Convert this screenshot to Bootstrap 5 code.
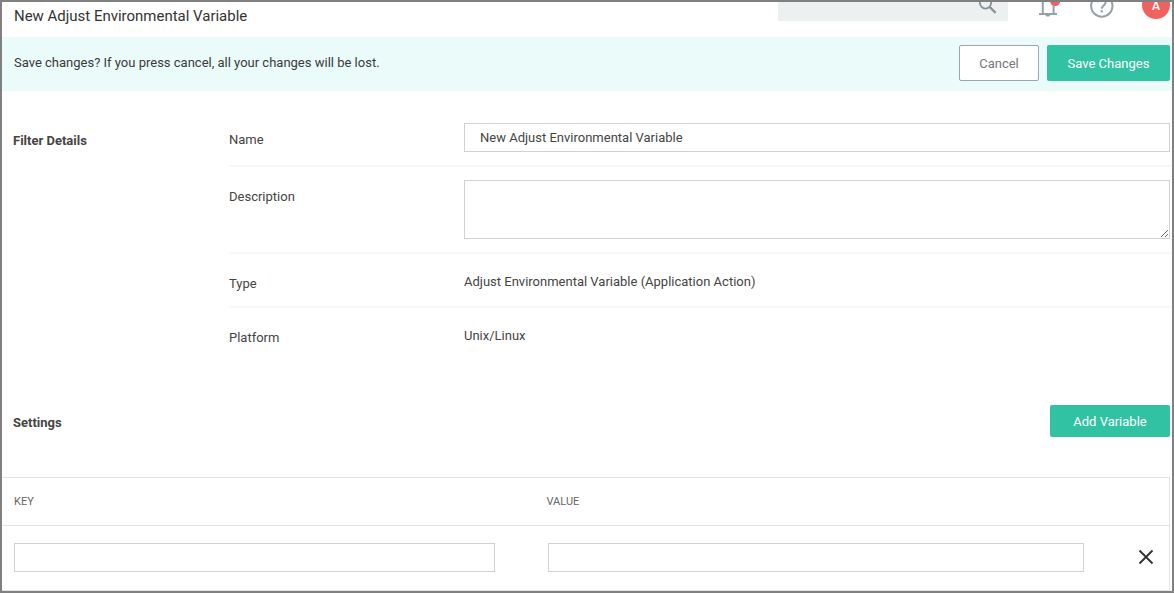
<!DOCTYPE html>
<html lang="en">
<head>
<meta charset="utf-8">
<title>New Adjust Environmental Variable</title>
<link href="https://cdn.jsdelivr.net/npm/bootstrap@5.3.0/dist/css/bootstrap.min.css" rel="stylesheet">
<style>
body{font-family:Roboto,"Liberation Sans",sans-serif;font-size:13px;line-height:20px;color:#444;background:#fff}
.app-frame{height:593px;border:2px solid #808080}
.topbar{height:35px}
.page-title{font-size:14.97px;line-height:20px;color:#333;padding:4px 0 0 12px}
.search-box{width:230px;height:19px;background:#ecf0f1;margin-right:30px;padding-right:11px}
.help-icon{margin-left:24px}
.avatar-clip{width:28px;height:17px;margin-left:24px;margin-right:2px}
.notice{height:54px;background:#ebfbfa;padding:8px 2px 0 12px;color:#3a3a3a}
.notice-text{padding-top:8px}
.app-btn{font-size:13px;line-height:18px;border-radius:2px;padding:1px 0 0;height:36px}
.btn-cancel{width:80px;background:#fff;border:1px solid #9aa5ac;color:#777}
.btn-go{background:#30c2a3;color:#fff;border:0}
.btn-save{width:123px}
.btn-add{width:120px;height:32px}
.details{padding:32px 2px 0 11px;height:314px}
.side-head{width:216px;font-weight:700;padding-top:8px}
.field-row{border-bottom:2px solid #f7f7f7}
.field-row:last-child{border-bottom:0}
.row-name{height:44px}
.row-desc{height:87px;padding-top:13px}
.row-text{height:54px;padding-top:18px}
.field-label{width:235px;padding-top:7px}
.row-text .field-label{padding-top:2px}
.app-input{height:29px;border:1px solid #d1d1d1;border-radius:0;font-size:13px;line-height:20px;padding:0 15px;color:#444}
textarea.app-input{height:59px;min-height:59px}
.app-input:focus{box-shadow:none;border-color:#30c2a3}
.settings-bar{height:72px;padding:0 2px 0 11px}
.settings-head{padding-top:8px}
.vars{height:114px;margin-right:2px;border:1px solid #e3e3e3;border-left:0}
.vars-head{height:48px;border-bottom:1px solid #e3e3e3;font-size:11px;line-height:47px;color:#666;padding-left:12px}
.col-key{width:532.5px}
.vars-line{padding:17px 0 0 12px}
.input-key{width:481px}
.input-value{width:536px;margin-left:53px}
.remove-icon{margin:6px 0 0 54px}
svg{display:block}
</style>
</head>
<body>
<div class="app-frame overflow-hidden">
  <header class="topbar d-flex">
    <h1 class="page-title mb-0 fw-normal me-auto">New Adjust Environmental Variable</h1>
    <div class="search-box d-flex justify-content-end">
      <svg width="18" height="12" viewBox="0 0 18 12" fill="none" stroke="#85929b" stroke-width="1.8"><circle cx="6.5" cy="1" r="5.6"/><path d="M10.6 4.9L16.6 10.9" stroke-width="2.2"/></svg>
    </div>
    <svg width="22" height="15" viewBox="0 0 22 15" fill="none"><path d="M4.8 0V11M15.6 3V11" stroke="#95a1aa" stroke-width="2"/><path d="M1 12H19" stroke="#95a1aa" stroke-width="2"/><path d="M7.3 13h5l-1 1.6H8.3z" fill="#95a1aa"/><circle cx="17.2" cy="-1.2" r="5.2" fill="#f0625f"/></svg>
    <svg class="help-icon" width="34" height="16" viewBox="-4 0 34 16" fill="none" stroke="#95a1aa"><circle cx="13.8" cy="4" r="10.7" stroke-width="2"/><path d="M10 0.3C10 -4 17.6 -4 17.6 0.3C17.6 3.4 13.8 3.5 13.8 6.8" stroke-width="2"/><path d="M13.8 8.3V10.4" stroke-width="2.2"/></svg>
    <div class="avatar-clip">
      <svg width="28" height="17" viewBox="0 0 28 17" overflow="visible"><circle cx="14" cy="3" r="14" fill="#f0625f"/><text x="14" y="8.3" text-anchor="middle" font-size="12" font-weight="500" fill="#fff">A</text></svg>
    </div>
  </header>

  <div class="notice d-flex align-items-start gap-2">
    <span class="notice-text me-auto">Save changes? If you press cancel, all your changes will be lost.</span>
    <button class="btn app-btn btn-cancel" type="button">Cancel</button>
    <button class="btn app-btn btn-go btn-save" type="button">Save Changes</button>
  </div>

  <section class="details d-flex">
    <div class="side-head flex-shrink-0">Filter Details</div>
    <div class="flex-grow-1">
      <div class="field-row row-name d-flex">
        <label class="field-label flex-shrink-0" for="name">Name</label>
        <input id="name" class="form-control app-input" value="New Adjust Environmental Variable">
      </div>
      <div class="field-row row-desc d-flex">
        <label class="field-label flex-shrink-0" for="desc">Description</label>
        <textarea id="desc" class="form-control app-input"></textarea>
      </div>
      <div class="field-row row-text d-flex">
        <div class="field-label flex-shrink-0">Type</div>
        <div>Adjust Environmental Variable (Application Action)</div>
      </div>
      <div class="field-row row-text d-flex">
        <div class="field-label flex-shrink-0">Platform</div>
        <div>Unix/Linux</div>
      </div>
    </div>
  </section>

  <div class="settings-bar d-flex justify-content-between align-items-start">
    <div class="settings-head fw-bold">Settings</div>
    <button class="btn app-btn btn-go btn-add" type="button">Add Variable</button>
  </div>

  <section class="vars">
    <div class="vars-head d-flex"><div class="col-key">KEY</div><div>VALUE</div></div>
    <div class="vars-line d-flex">
      <input class="form-control app-input input-key" aria-label="Key">
      <input class="form-control app-input input-value" aria-label="Value">
      <svg class="remove-icon" width="16" height="16" viewBox="0 0 16 16" stroke="#333" stroke-width="1.9"><path d="M1.5 1.5L14.5 14.5M14.5 1.5L1.5 14.5"/></svg>
    </div>
  </section>
</div>
<script src="https://cdn.jsdelivr.net/npm/bootstrap@5.3.0/dist/js/bootstrap.bundle.min.js"></script>
</body>
</html>
